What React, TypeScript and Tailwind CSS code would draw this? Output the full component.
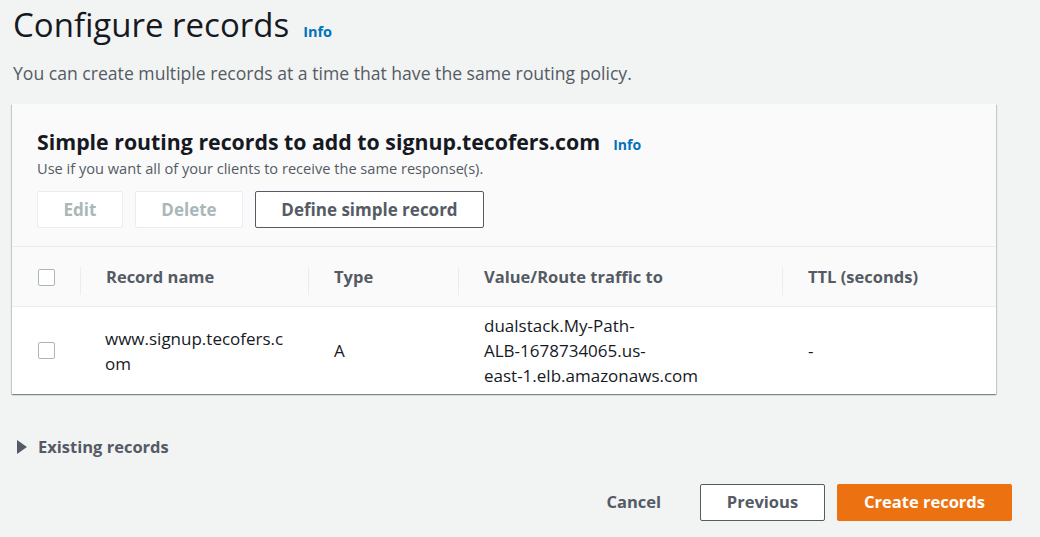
import React from "react";

const font = { fontFamily: '"Open Sans", "Noto Sans", sans-serif' };

function Checkbox() {
  return <div className="h-[17px] w-[17px] rounded-[2px] border border-[#aab7b8] bg-white" />;
}

function Divider() {
  return <div className="absolute left-0 top-[18px] h-[28px] w-px bg-[#eaeded]" />;
}

export default function App() {
  return (
    <div className="h-[537px] w-[1040px] overflow-hidden bg-[#f2f3f3] text-[#16191f]" style={font}>
      <div className="flex items-baseline pl-[13px] pt-[3px]">
        <h1 className="text-[33px] font-normal leading-[44px] text-[#16191f]">Configure records</h1>
        <span className="ml-[14px] text-[14.5px] font-bold text-[#0073bb]">Info</span>
      </div>
      <p className="mt-[14px] pl-[13px] text-[17.6px] leading-[24px] text-[#545b64]">
        You can create multiple records at a time that have the same routing policy.
      </p>

      <div className="ml-[12px] mt-[19px] w-[984px] bg-white shadow-[0_1px_1px_0_rgba(0,28,36,0.3),1px_1px_1px_0_rgba(0,28,36,0.15),-1px_1px_1px_0_rgba(0,28,36,0.15)]">
        <div className="bg-[#fafafa] px-[25px] pb-[18px] pt-[23px]">
          <div className="flex items-baseline">
            <h2 className="text-[21.3px] font-bold leading-[30px] text-[#16191f]">
              Simple routing records to add to signup.tecofers.com
            </h2>
            <span className="ml-[13px] text-[14px] font-bold text-[#0073bb]">Info</span>
          </div>
          <p className="text-[14.6px] leading-[22px] text-[#545b64]">
            Use if you want all of your clients to receive the same response(s).
          </p>
          <div className="mt-[12px] flex gap-[12px]">
            <button className="h-[37px] w-[86px] rounded-[2px] border border-[#eaeded] bg-white text-[17px] font-bold text-[#aab7b8]">
              Edit
            </button>
            <button className="h-[37px] w-[108px] rounded-[2px] border border-[#eaeded] bg-white text-[17px] font-bold text-[#aab7b8]">
              Delete
            </button>
            <button className="h-[37px] w-[229px] rounded-[2px] border border-[#545b64] bg-white text-[17px] font-bold text-[#545b64]">
              Define simple record
            </button>
          </div>
        </div>
        <div className="flex h-[61px] items-center border-t border-b border-[#eaeded] bg-[#fafafa] pt-[2px] text-[16.5px] font-bold text-[#545b64]">
          <div className="flex w-[68px] shrink-0 justify-center pl-[1px]">
            <Checkbox />
          </div>
          <div className="relative flex h-full w-[228px] shrink-0 items-center pl-[26px]">
            <Divider />
            Record name
          </div>
          <div className="relative flex h-full w-[150px] shrink-0 items-center pl-[26px]">
            <Divider />
            Type
          </div>
          <div className="relative flex h-full w-[324px] shrink-0 items-center pl-[26px]">
            <Divider />
            Value/Route traffic to
          </div>
          <div className="relative flex h-full flex-1 items-center pl-[26px]">
            <Divider />
            TTL (seconds)
          </div>
        </div>
        <div className="flex h-[87px] items-center text-[17px] leading-[25px] text-[#16191f]">
          <div className="flex w-[68px] shrink-0 justify-center pl-[1px]">
            <Checkbox />
          </div>
          <div className="w-[228px] shrink-0 pl-[25px]">
            <div>www.signup.tecofers.c</div>
            <div>om</div>
          </div>
          <div className="w-[150px] shrink-0 pl-[26px]">A</div>
          <div className="w-[324px] shrink-0 pl-[26px]">
            <div>dualstack.My-Path-</div>
            <div>ALB-1678734065.us-</div>
            <div>east-1.elb.amazonaws.com</div>
          </div>
          <div className="flex-1 pl-[26px]">-</div>
        </div>
      </div>

      <div className="mt-[42px] flex items-center pl-[17px]">
        <svg width="10" height="14" viewBox="0 0 10 14">
          <path d="M0 0 L10 7 L0 14 Z" fill="#545b64" />
        </svg>
        <span className="ml-[11px] text-[16.5px] font-bold leading-[22px] text-[#545b64]">Existing records</span>
      </div>

      <div className="mt-[26px] flex items-center justify-end pr-[28px]">
        <button className="mr-[39px] text-[16.5px] font-bold text-[#545b64]">Cancel</button>
        <button className="h-[37px] w-[125px] rounded-[2px] border border-[#545b64] bg-white text-[16.5px] font-bold text-[#545b64]">
          Previous
        </button>
        <button className="ml-[12px] h-[37px] w-[175px] rounded-[2px] bg-[#ec7211] text-[16.5px] font-bold text-white">
          Create records
        </button>
      </div>
    </div>
  );
}
